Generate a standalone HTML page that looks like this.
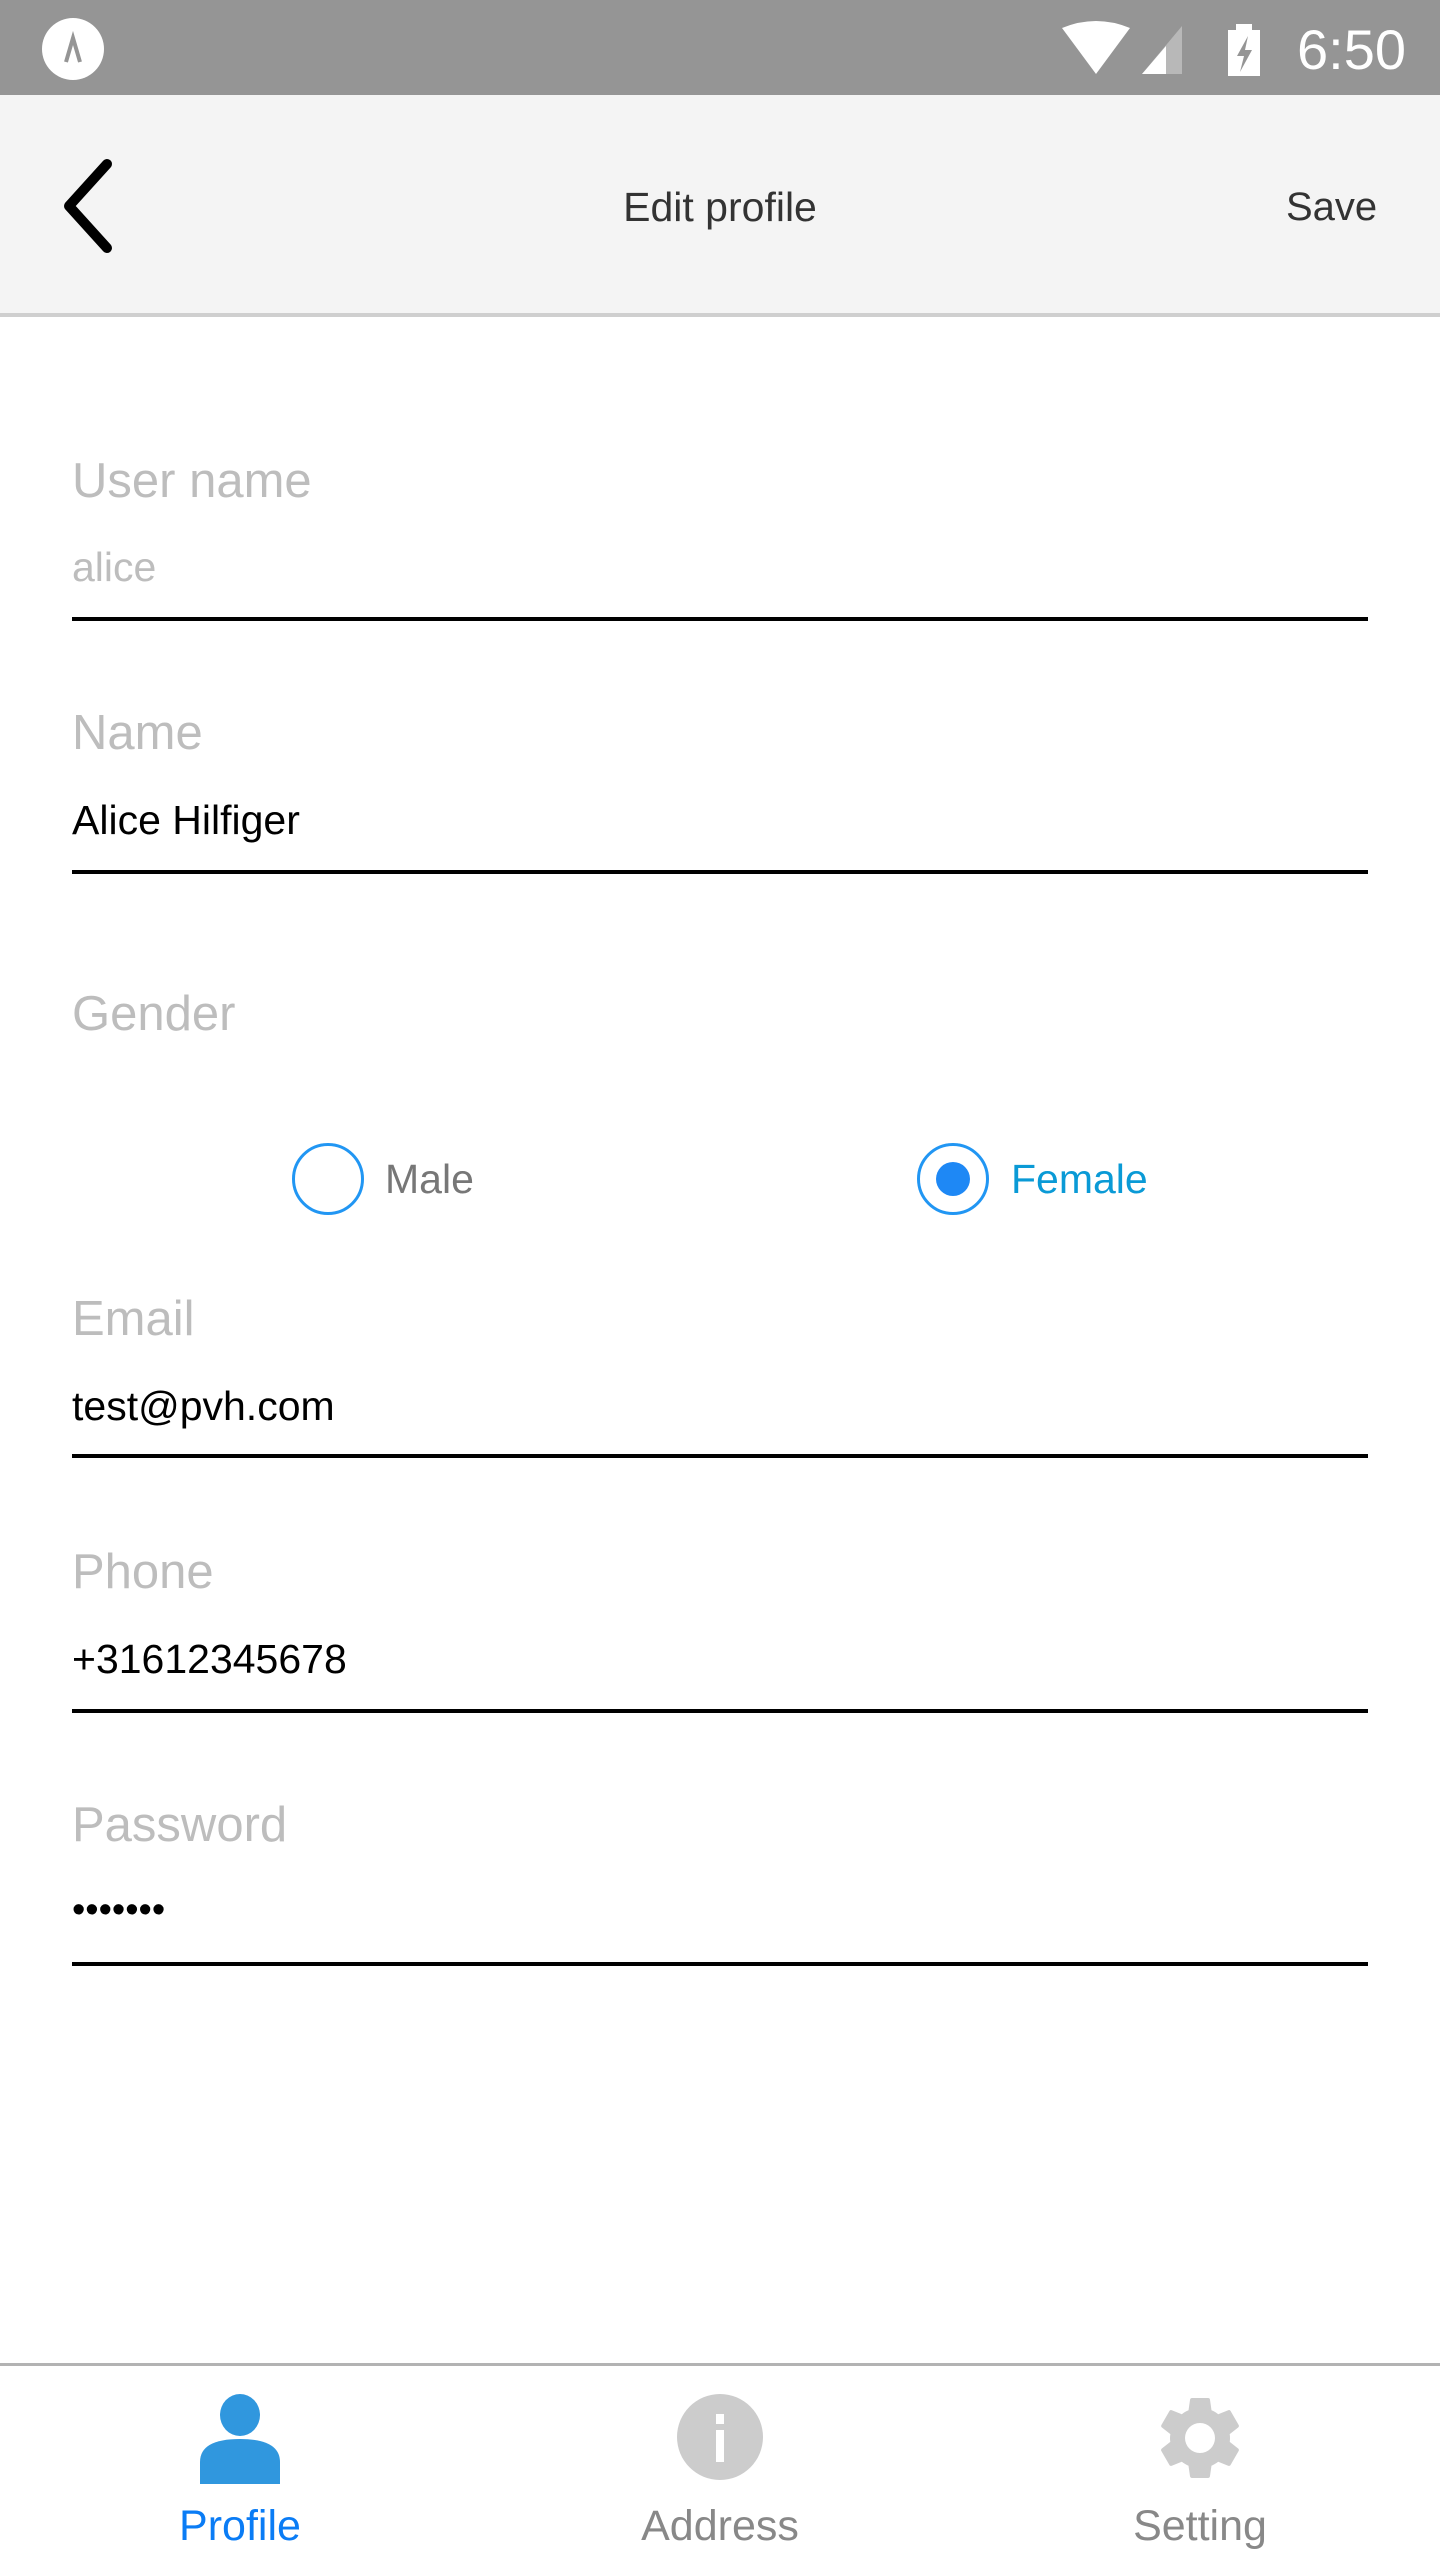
<!DOCTYPE html>
<html><head><style>
*{margin:0;padding:0;box-sizing:border-box}
body{width:1440px;height:2560px;background:#fff;position:relative;overflow:hidden;font-family:"Liberation Sans",Roboto,sans-serif}
.a{position:absolute;white-space:nowrap}
.lbl{font-size:49px;color:#bdbdbd;left:72px;line-height:60px}
.val{font-size:41px;color:#000;left:72px;line-height:50px}
.ln{position:absolute;left:72px;width:1296px;height:4px;background:#000}
</style></head><body>
<div class="a" style="left:0;top:0;width:1440px;height:95px;background:#959595"></div>
<div class="a" style="left:42px;top:18px;width:62px;height:62px;border-radius:50%;background:#fff"></div>
<svg class="a" style="left:42px;top:18px" width="62" height="62"><path d="M24 44 L31 20 L38 44" stroke="#959595" stroke-width="4" fill="none"/></svg>
<svg class="a" style="left:1062px;top:20px" width="230" height="60">
<path d="M0 8 Q34 -6 68 8 L34 54 Z" fill="#fff"/>
<path d="M80 54 L120 6 L120 54 Z" fill="#b8b8b8"/><path d="M80 54 L104 26 L104 54 Z" fill="#fff"/>
<rect x="174" y="4" width="16" height="8" fill="#fff"/><rect x="166" y="10" width="32" height="46" fill="#fff"/>
<path d="M186 16 L175 36 L182 36 L178 52 L190 30 L183 30 Z" fill="#959595"/>
</svg>
<div class="a" style="left:1297px;top:20px;font-size:56px;color:#fff;line-height:60px">6:50</div>
<div class="a" style="left:0;top:95px;width:1440px;height:222px;background:#f4f4f4;border-bottom:4px solid #cfcfcf"></div>
<svg class="a" style="left:55px;top:158px" width="70" height="96"><path d="M52 6 L14 48 L52 90" stroke="#000" stroke-width="10" fill="none" stroke-linecap="round" stroke-linejoin="round"/></svg>
<div class="a" style="left:0;width:1440px;text-align:center;top:183px;font-size:41px;color:#333;line-height:48px">Edit profile</div>
<div class="a" style="left:1286px;top:183px;font-size:40px;color:#333;line-height:48px">Save</div>

<div class="a lbl" style="top:451px">User name</div>
<div class="a val" style="top:542px;color:#bdbdbd">alice</div>
<div class="ln" style="top:617px"></div>
<div class="a lbl" style="top:703px">Name</div>
<div class="a val" style="top:795px">Alice Hilfiger</div>
<div class="ln" style="top:870px"></div>
<div class="a lbl" style="top:984px">Gender</div>
<div class="a" style="left:292px;top:1143px;width:72px;height:72px;border-radius:50%;border:3px solid #2196f3"></div>
<div class="a" style="left:385px;top:1154px;font-size:41px;color:#777;line-height:50px">Male</div>
<div class="a" style="left:917px;top:1143px;width:72px;height:72px;border-radius:50%;border:3px solid #2196f3"></div>
<div class="a" style="left:936px;top:1162px;width:34px;height:34px;border-radius:50%;background:#1e88f5"></div>
<div class="a" style="left:1011px;top:1154px;font-size:41px;color:#0a9ad6;line-height:50px">Female</div>
<div class="a lbl" style="top:1289px">Email</div>
<div class="a val" style="top:1381px">test@pvh.com</div>
<div class="ln" style="top:1454px"></div>
<div class="a lbl" style="top:1542px">Phone</div>
<div class="a val" style="top:1634px">+31612345678</div>
<div class="ln" style="top:1709px"></div>
<div class="a lbl" style="top:1795px">Password</div>
<div class="a val" style="top:1885px;font-size:38px">•••••••</div>
<div class="ln" style="top:1962px"></div>

<div class="a" style="left:0;top:2363px;width:1440px;height:3px;background:#b3b3b3"></div>
<svg class="a" style="left:196px;top:2394px" width="90" height="90">
<ellipse cx="44" cy="21" rx="20" ry="21" fill="#3097de"/>
<path d="M4 90 L4 68 Q4 45 44 45 Q84 45 84 68 L84 90 Z" fill="#3097de"/></svg>
<svg class="a" style="left:676px;top:2392px" width="90" height="90">
<circle cx="44" cy="45" r="43" fill="#ccc"/><rect x="40" y="22" width="8" height="10" fill="#fff"/><rect x="40" y="38" width="8" height="32" fill="#fff"/></svg>
<svg class="a" style="left:1150px;top:2388px" width="100" height="100" viewBox="0 0 24 24">
<path fill="#ccc" d="M19.14 12.94c.04-.3.06-.61.06-.94 0-.32-.02-.64-.07-.94l2.03-1.58a.49.49 0 0 0 .12-.61l-1.920-3.32a.49.49 0 0 0-.59-.22l-2.39.96c-.5-.38-1.03-.7-1.620-.94l-.36-2.54a.48.48 0 0 0-.48-.41h-3.84c-.24 0-.43.17-.47.41l-.36 2.54c-.59.24-1.13.57-1.62.94l-2.39-.96a.49.49 0 0 0-.59.22L2.74 8.87c-.12.21-.08.47.12.61l2.03 1.58c-.05.3-.09.63-.09.94s.02.64.07.94l-2.03 1.58a.49.49 0 0 0-.12.61l1.92 3.32c.12.22.37.29.59.22l2.39-.96c.5.38 1.03.7 1.62.94l.36 2.54c.05.24.24.41.48.41h3.84c.24 0 .44-.17.47-.41l.36-2.54c.59-.24 1.13-.56 1.62-.94l2.39.96c.22.08.47 0 .59-.22l1.92-3.32c.12-.22.07-.47-.12-.61l-2.010-1.58zM12 15.6A3.6 3.6 0 1 1 12 8.4a3.6 3.6 0 0 1 0 7.2z"/></svg>
<div class="a" style="left:0;width:480px;text-align:center;top:2500px;font-size:43px;color:#0a7cf5;line-height:52px">Profile</div>
<div class="a" style="left:480px;width:480px;text-align:center;top:2500px;font-size:43px;color:#888;line-height:52px">Address</div>
<div class="a" style="left:960px;width:480px;text-align:center;top:2500px;font-size:43px;color:#888;line-height:52px">Setting</div>
</body></html>
